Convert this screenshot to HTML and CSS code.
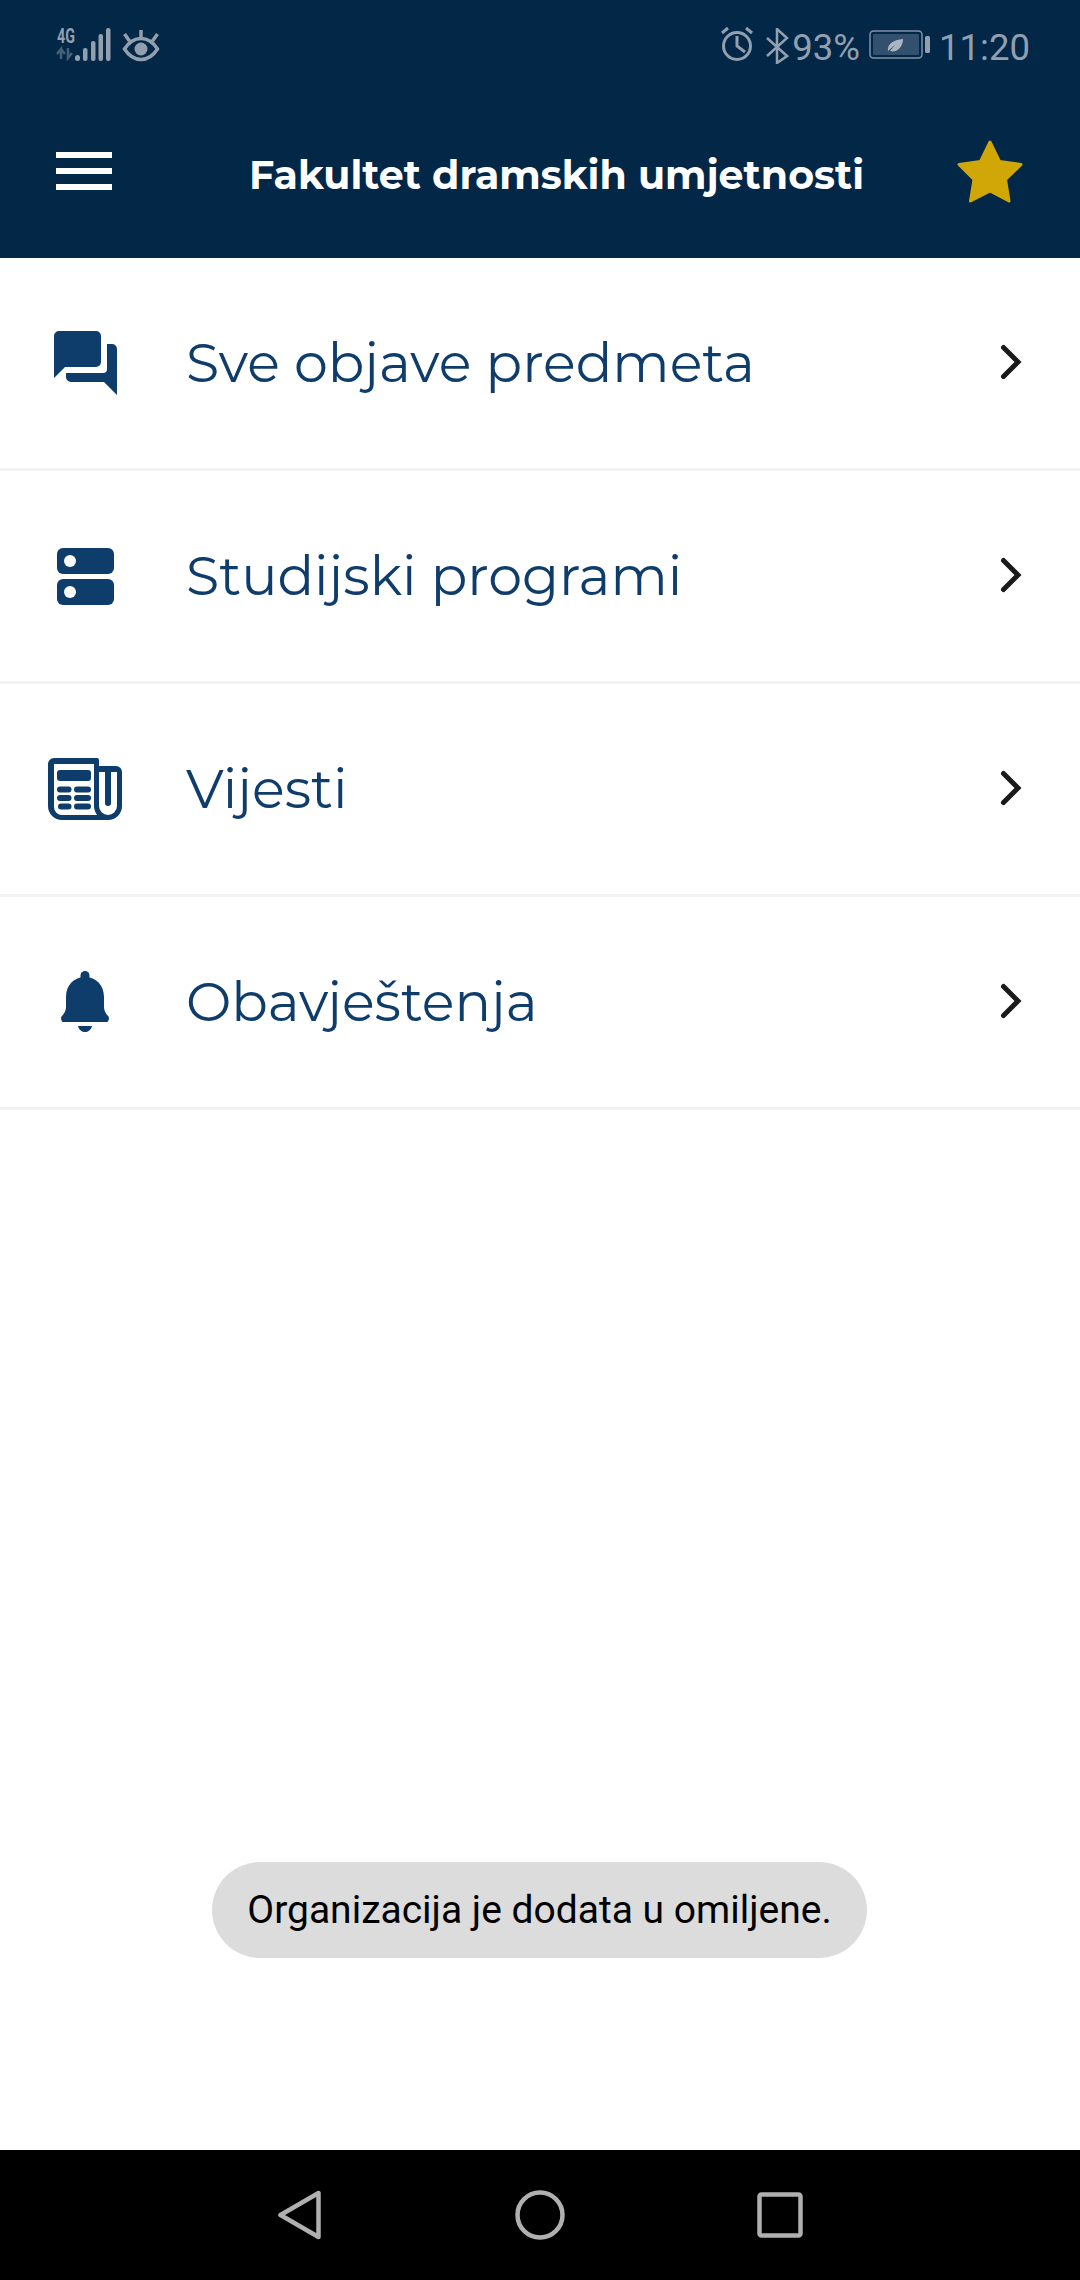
FILE: index.html
```html
<!DOCTYPE html>
<html>
<head>
<meta charset="utf-8">
<title>Fakultet dramskih umjetnosti</title>
<link rel="stylesheet" href="styles.css">
</head>
<body>
<div class="screen">
  <header class="top">
    <div class="status">
      <div class="status-left">
        <svg class="signal" width="56" height="42" viewBox="0 -6 56 42">
          <text x="1" y="17" class="tiny" textLength="18" lengthAdjust="spacingAndGlyphs">4G</text>
          <path d="M5 33V23L1 28M5 23l4 5M5 33v-9M12 22v10l4-5" fill="none" stroke="#46607a" stroke-width="2.500"/>
          <rect x="19" y="29" width="5" height="6" rx="2.500" fill="#929fae"/>
          <rect x="27" y="22" width="4.500" height="13" rx="2" fill="#929fae"/>
          <rect x="35" y="15" width="4.500" height="20" rx="2" fill="#929fae"/>
          <rect x="42.500" y="8" width="4.500" height="27" rx="2" fill="#929fae"/>
          <rect x="50" y="2" width="4.500" height="33" rx="2" fill="#929fae"/>
        </svg>
        <svg class="eye" width="38" height="33" viewBox="0 0 38 33">
          <path d="M2.500 20C7 13 12 9.500 19 9.500S31 13 35.500 20C31 27 26 30.500 19 30.500S7 27 2.500 20z" fill="none" stroke="#929fae" stroke-width="3.500"/>
          <circle cx="19" cy="20" r="6.500" fill="#929fae"/>
          <path d="M19 1v8M2.500 5l5 7M35.500 5l-5 7" fill="none" stroke="#929fae" stroke-width="3.500"/>
        </svg>
      </div>
      <div class="status-right">
        <svg class="alarm" width="34" height="36" viewBox="0 0 34 36">
          <circle cx="17" cy="20" r="13.500" fill="none" stroke="#929fae" stroke-width="3"/>
          <path d="M17 10v10l8 6M2 7l6-5M32 7l-6-5" fill="none" stroke="#929fae" stroke-width="3"/>
        </svg>
        <svg class="bt" width="24" height="36" viewBox="0 0 24 36">
          <path d="M2 10l20 18-10 7V1l10 9L2 28" fill="none" stroke="#929fae" stroke-width="2.500"/>
        </svg>
        <span class="pct">93%</span>
        <svg class="batt" width="62" height="30" viewBox="0 0 62 30">
          <rect x="1" y="1" width="52" height="27" rx="3.500" fill="none" stroke="#8093a8" stroke-width="1.500"/>
          <rect x="4" y="4" width="46" height="21" rx="1" fill="#33506f"/>
          <rect x="56" y="6" width="5" height="17" rx="1.500" fill="#929fae"/>
          <path d="M19 21c-1-7 5-11 15-12 0 8-6 14-13 12l5-6z" fill="#a9b6c2"/>
        </svg>
        <span class="clock">11:20</span>
      </div>
    </div>
    <div class="appbar">
      <div class="burger"><i></i><i></i><i></i></div>
      <h1>Fakultet dramskih umjetnosti</h1>
      <svg class="star" width="66" height="63" viewBox="0 0 66 63">
        <path d="M33 2l9.500 19.500 21.500 3-15.500 15 3.500 21.500L33 51 13.500 61 17 39.500 2 24.500l21.500-3z" fill="#d1a707" stroke="#d1a707" stroke-width="3" stroke-linejoin="round"/>
      </svg>
    </div>
  </header>

  <main class="menu">
    <div class="row">
      <span class="row-icon">
        <svg width="63" height="64" viewBox="0 0 63 64">
          <path d="M5 0h37a5 5 0 0 1 5 5v26a5 5 0 0 1-5 5H11L0 47V5a5 5 0 0 1 5-5z" fill="#0e3c6b"/>
          <path d="M53 13h5a5 5 0 0 1 5 5v46L50 51H17a5 5 0 0 1-5-5v-4h37a4 4 0 0 0 4-4z" fill="#0e3c6b"/>
        </svg>
      </span>
      <span class="label">Sve objave predmeta</span>
      <svg class="chev" width="24" height="38" viewBox="0 0 24 38"><path d="M3.500 3.500L18 18 3.500 32.500" fill="none" stroke="#1a1a1a" stroke-width="5" stroke-linecap="round"/></svg>
    </div>
    <div class="row">
      <span class="row-icon">
        <svg width="57" height="57" viewBox="0 0 57 57">
          <rect width="57" height="26" rx="6" fill="#0e3c6b"/>
          <rect y="31" width="57" height="26" rx="6" fill="#0e3c6b"/>
          <circle cx="13" cy="13" r="6" fill="#fff"/>
          <circle cx="13" cy="44" r="6" fill="#fff"/>
        </svg>
      </span>
      <span class="label">Studijski programi</span>
      <svg class="chev" width="24" height="38" viewBox="0 0 24 38"><path d="M3.500 3.500L18 18 3.500 32.500" fill="none" stroke="#1a1a1a" stroke-width="5" stroke-linecap="round"/></svg>
    </div>
    <div class="row">
      <span class="row-icon">
        <svg width="74" height="62" viewBox="0 0 74 62">
          <path d="M6 0H49a2 2 0 0 1 2 2V8H68a6 6 0 0 1 6 6V48a14 14 0 0 1-14 14H14A14 14 0 0 1 0 48V6A6 6 0 0 1 6 0z" fill="#0e3c6b"/>
          <path d="M6 6H46V48c0 3 1 6 3 9H14a8 8 0 0 1-8-8z" fill="#fff"/>
          <path d="M51 14H69V48a9 9 0 0 1-18 0z" fill="#fff"/>
          <path d="M57 14h6V45a3 3 0 0 1-6 0z" fill="#0e3c6b"/>
          <rect x="9" y="12" width="34" height="11" rx="3" fill="#0e3c6b"/>
          <rect x="9" y="28.500" width="14.500" height="6" rx="3" fill="#0e3c6b"/>
          <rect x="26" y="28.500" width="17" height="6" rx="3" fill="#0e3c6b"/>
          <rect x="9" y="37" width="14.500" height="6" rx="3" fill="#0e3c6b"/>
          <rect x="26" y="37" width="17" height="6" rx="3" fill="#0e3c6b"/>
          <rect x="10" y="45.500" width="13.500" height="6" rx="3" fill="#0e3c6b"/>
          <rect x="26" y="45.500" width="17" height="6" rx="3" fill="#0e3c6b"/>
        </svg>
      </span>
      <span class="label">Vijesti</span>
      <svg class="chev" width="24" height="38" viewBox="0 0 24 38"><path d="M3.500 3.500L18 18 3.500 32.500" fill="none" stroke="#1a1a1a" stroke-width="5" stroke-linecap="round"/></svg>
    </div>
    <div class="row">
      <span class="row-icon">
        <svg width="48" height="62" viewBox="0 0 48 62">
          <rect x="19.500" y="0" width="9" height="10" rx="4.500" fill="#0e3c6b"/>
          <path d="M24 6C13 6 5 14 5 26v10c0 4-2 7-4.500 9.500C-.5 47 .5 51 2 51h44c1.500 0 2.500-4 1.500-5.500C45 43 43 40 43 36V26C43 14 35 6 24 6z" fill="#0e3c6b"/>
          <path d="M17 55h14c-1 4-4 6-7 6s-6-2-7-6z" fill="#0e3c6b"/>
        </svg>
      </span>
      <span class="label">Obavještenja</span>
      <svg class="chev" width="24" height="38" viewBox="0 0 24 38"><path d="M3.500 3.500L18 18 3.500 32.500" fill="none" stroke="#1a1a1a" stroke-width="5" stroke-linecap="round"/></svg>
    </div>
  </main>

  <div class="toast">Organizacija je dodata u omiljene.</div>

  <nav class="softkeys">
    <svg class="back" width="44" height="50" viewBox="0 0 44 50"><path d="M41.500 3v44L3.500 25z" fill="none" stroke="#b0b0b0" stroke-width="4.500" stroke-linejoin="round"/></svg>
    <svg class="home" width="50" height="50" viewBox="0 0 50 50"><circle cx="25" cy="25" r="22.500" fill="none" stroke="#b0b0b0" stroke-width="4.500"/></svg>
    <svg width="46" height="46" viewBox="0 0 46 46"><rect x="2.500" y="2.500" width="41" height="41" rx="2" fill="none" stroke="#b0b0b0" stroke-width="4.500"/></svg>
  </nav>
</div>
</body>
</html>
```

FILE: styles.css
```css
html, body {
    margin: 0;
    padding: 0;
}

.screen {
    width: 1080px;
    height: 2280px;
    display: flex;
    flex-direction: column;
    background: #fff;
    position: relative;
    overflow: hidden;
}

.top {
    background: #022747;
    height: 258px;
    box-sizing: border-box;
    padding: 0 50px 0 56px;
}

.status {
    height: 92px;
    display: flex;
    justify-content: space-between;
    align-items: flex-start;
    padding-top: 26px;
    box-sizing: border-box;
}

.status-left, .status-right {
    display: flex;
    align-items: flex-start;
}

.signal {
    margin-top: -6px;
}

.eye {
    margin: 3px 0 0 10px;
}

.alarm {
    margin-right: 11px;
}

.bt {
    margin: 2px 3px 0 0;
}

.tiny {
    font: bold 21px "Roboto", sans-serif;
    fill: #929fae;
}

.pct, .clock {
    font: 36.500px/46px "Roboto", sans-serif;
    color: #929fae;
    margin-top: -1px;
}

.batt {
    margin: 4px 8px 0 9px;
}

.appbar {
    height: 166px;
    display: flex;
    align-items: center;
    padding-bottom: 8px;
    box-sizing: border-box;
}

.burger {
    width: 56px;
    display: flex;
    flex-direction: column;
    gap: 10px;
}

.burger i {
    display: block;
    height: 6px;
    background: #fff;
}

.appbar h1 {
    flex: 1;
    margin: 0;
    padding: 8px 0 0 44px;
    text-align: center;
    color: #fff;
    font: bold 39.500px "Montserrat", "Open Sans", sans-serif;
}

.star {
    margin-right: 7px;
}

.menu {
    flex: 1;
}

.row {
    height: 213px;
    box-sizing: border-box;
    border-bottom: 3px solid #f3f3f3;
    display: flex;
    align-items: center;
    padding-right: 56px;
}

.row-icon {
    width: 186px;
    display: flex;
    justify-content: center;
    padding-right: 16px;
    box-sizing: border-box;
}

.label {
    flex: 1;
    font: 54px "Montserrat", "Open Sans", sans-serif;
    color: #0e3c6b;
}

.toast {
    position: absolute;
    left: 212px;
    top: 1862px;
    width: 655px;
    height: 96px;
    border-radius: 48px;
    background: #dcdcdc;
    color: #000;
    font: 39px/96px "Roboto", sans-serif;
    text-align: center;
}

.softkeys {
    height: 130px;
    background: #000;
    display: flex;
    justify-content: center;
    align-items: center;
    gap: 191px;
}

.back {
    margin-right: 4px;
}

.home {
    margin: 0 1px 0 -1px;
}
```
